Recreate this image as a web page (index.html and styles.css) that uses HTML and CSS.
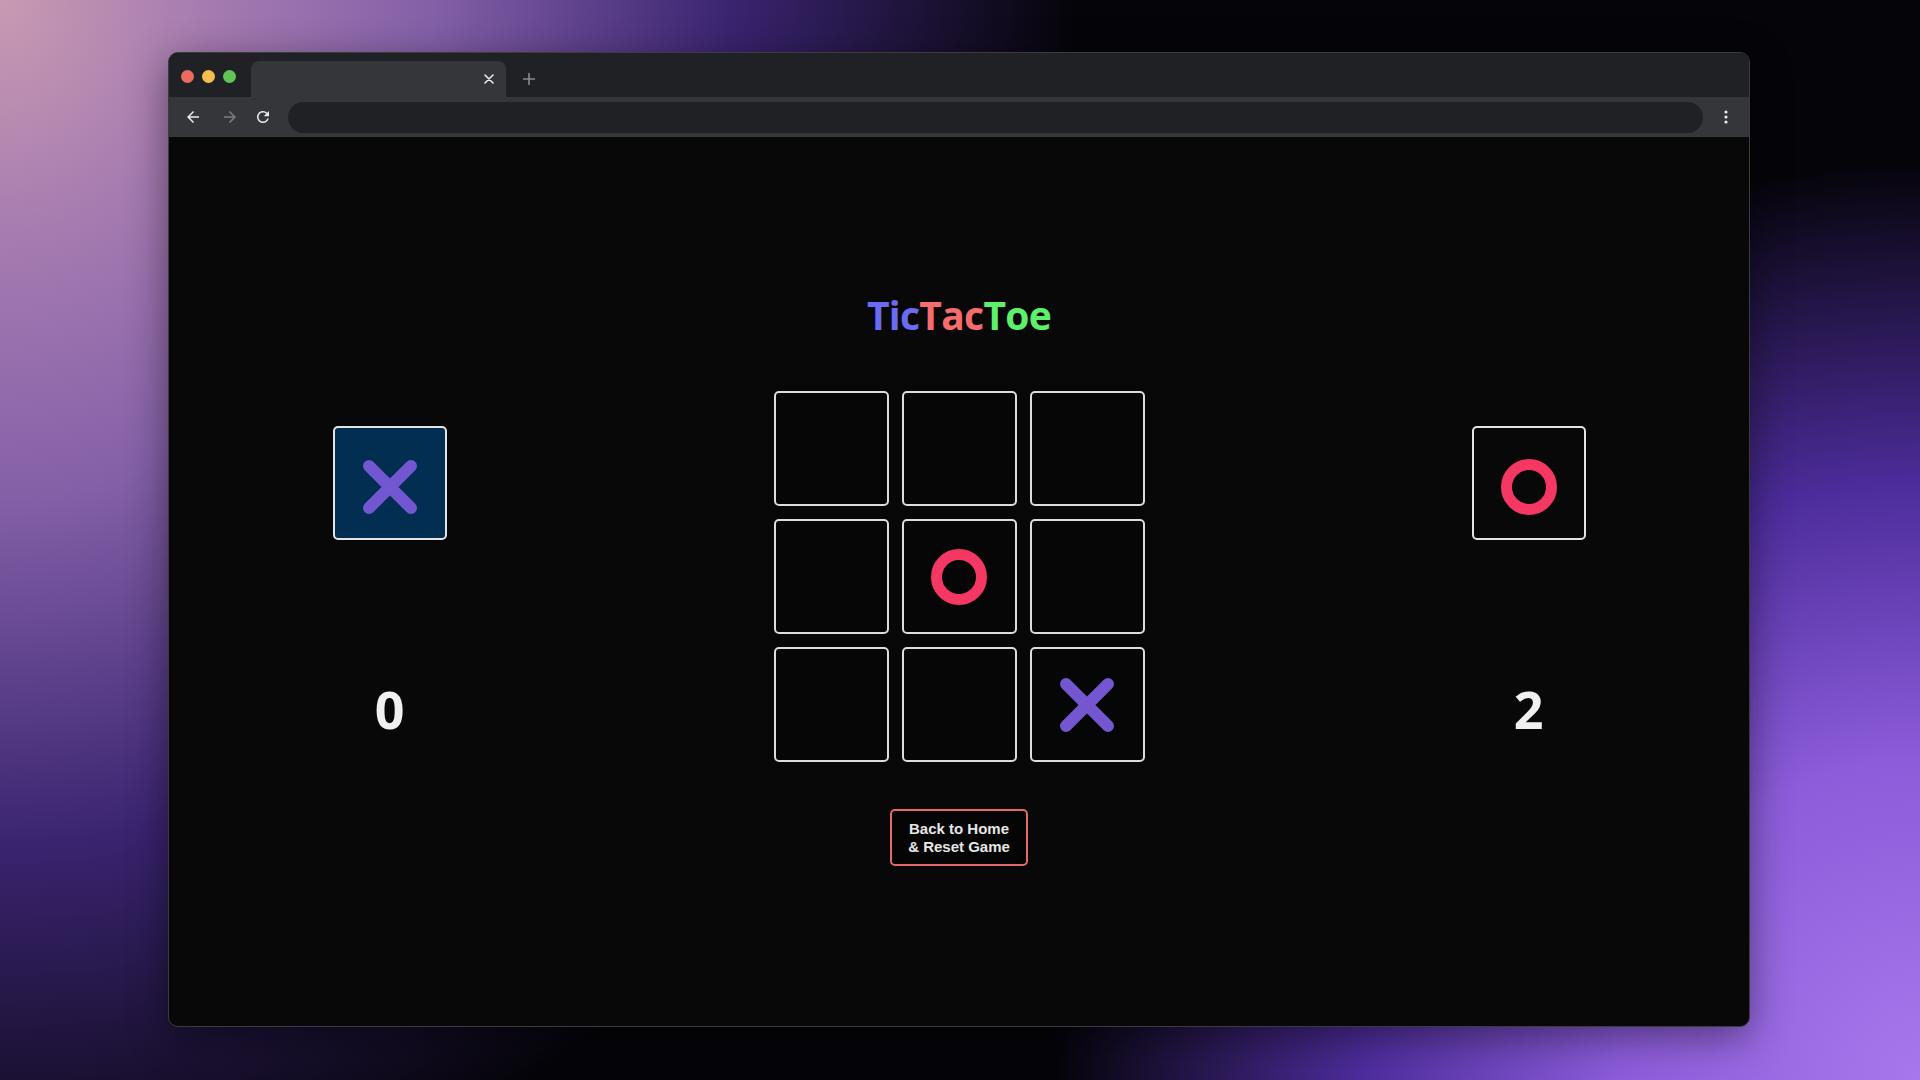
FILE: index.html
```html
<!DOCTYPE html>
<html lang="en">
<head>
<meta charset="utf-8">
<title>TicTacToe</title>
<link rel="stylesheet" href="styles.css">
</head>
<body>
<div class="window">
  <div class="tabstrip">
    <div class="lights">
      <span class="dot dot-red"></span>
      <span class="dot dot-yellow"></span>
      <span class="dot dot-green"></span>
    </div>
    <div class="tab">
      <svg class="tab-close" width="10" height="10" viewBox="0 0 10 10"><path d="M1 1L9 9M9 1L1 9" stroke="#e8eaed" stroke-width="1.6" stroke-linecap="round"/></svg>
    </div>
    <svg class="newtab" width="12" height="12" viewBox="0 0 12 12"><path d="M6 0V12M0 6H12" stroke="#8a8b8e" stroke-width="1.6"/></svg>
  </div>
  <div class="toolbar">
    <svg class="nav nav-back" width="18" height="18" viewBox="0 0 24 24"><path d="M20 11H7.83l5.59-5.59L12 4l-8 8 8 8 1.41-1.41L7.83 13H20v-2z" fill="#e8eaed"/></svg>
    <svg class="nav nav-fwd" width="18" height="18" viewBox="0 0 24 24"><path d="M12 4l-1.41 1.41L16.17 11H4v2h12.17l-5.58 5.59L12 20l8-8z" fill="#7d7e81"/></svg>
    <svg class="nav nav-reload" width="18" height="18" viewBox="0 0 24 24"><path d="M17.65 6.35A7.958 7.958 0 0 0 12 4c-4.42 0-7.99 3.58-7.99 8s3.57 8 7.99 8c3.73 0 6.84-2.55 7.73-6h-2.08A5.99 5.99 0 0 1 12 18c-3.31 0-6-2.69-6-6s2.69-6 6-6c1.66 0 3.14 0.69 4.22 1.78L13 11h7V4l-2.35 2.35z" fill="#e8eaed"/></svg>
    <div class="address"></div>
    <svg class="menu" width="4" height="14" viewBox="0 0 4 14"><circle cx="2" cy="2" r="1.6" fill="#e8eaed"/><circle cx="2" cy="7" r="1.6" fill="#e8eaed"/><circle cx="2" cy="12" r="1.6" fill="#e8eaed"/></svg>
  </div>
  <div class="content">
    <h1 class="title"><span class="t-tic">Tic</span><span class="t-tac">Tac</span><span class="t-toe">Toe</span></h1>
    <div class="game-row">
      <div class="side">
        <div class="mark-box mark-box-active">
          <svg width="54" height="54" viewBox="0 0 54 54"><path d="M6 6L48 48M48 6L6 48" stroke="#7257d0" stroke-width="12" stroke-linecap="round"/></svg>
        </div>
        <div class="score">0</div>
      </div>
      <div class="board">
        <div class="cell"></div>
        <div class="cell"></div>
        <div class="cell"></div>
        <div class="cell"></div>
        <div class="cell">
          <svg width="56" height="56" viewBox="0 0 56 56"><circle cx="28" cy="28" r="22.5" fill="none" stroke="#f43763" stroke-width="11"/></svg>
        </div>
        <div class="cell"></div>
        <div class="cell"></div>
        <div class="cell"></div>
        <div class="cell">
          <svg width="54" height="54" viewBox="0 0 54 54"><path d="M6 6L48 48M48 6L6 48" stroke="#7257d0" stroke-width="12" stroke-linecap="round"/></svg>
        </div>
      </div>
      <div class="side">
        <div class="mark-box">
          <svg width="56" height="56" viewBox="0 0 56 56"><circle cx="28" cy="28" r="22.5" fill="none" stroke="#f43763" stroke-width="11"/></svg>
        </div>
        <div class="score">2</div>
      </div>
    </div>
    <button class="reset">Back to Home<br>&amp; Reset Game</button>
  </div>
</div>
</body>
</html>
```

FILE: styles.css
```css
html, body {
  margin: 0;
  padding: 0;
}

body {
  width: 1920px;
  height: 1080px;
  overflow: hidden;
  box-sizing: border-box;
  padding: 52px 0 0 168px;
  background:
    radial-gradient(ellipse 56% 115% at 0% 0%, #c99ab2 0%, #a47ab0 20%, #8460a8 40%, #3a2470 68%, rgba(30, 18, 60, 0) 100%),
    radial-gradient(ellipse 45% 85% at 100% 100%, #a778ec 0%, #8c5cda 35%, #4c2c9a 65%, rgba(20, 10, 50, 0) 100%),
    #050409;
  font-family: "Open Sans", "Liberation Sans", sans-serif;
}

.window {
  width: 1582px;
  height: 975px;
  box-sizing: border-box;
  border: 1px solid #3c3c40;
  border-radius: 10px;
  overflow: hidden;
  display: flex;
  flex-direction: column;
  background: #080808;
  box-shadow: 0 10px 40px rgba(0, 0, 0, 0.45);
}

/* ---------- tab strip ---------- */
.tabstrip {
  height: 44px;
  flex: none;
  background: #202124;
  display: flex;
  align-items: flex-end;
}

.lights {
  display: flex;
  gap: 8px;
  align-self: flex-start;
  margin: 17px 0 0 12px;
}

.dot {
  width: 13px;
  height: 13px;
  border-radius: 50%;
}

.dot-red { background: #ed6a5e; }
.dot-yellow { background: #f5bf4f; }
.dot-green { background: #61c554; }

.tab {
  margin-left: 15px;
  width: 255px;
  height: 36px;
  background: #35363a;
  border-radius: 8px 8px 0 0;
  display: flex;
  align-items: center;
  justify-content: flex-end;
  box-sizing: border-box;
  padding: 0 12px 0 0;
}

.tab-close {
  display: block;
  margin-top: -1px;
}

.newtab {
  align-self: center;
  margin: 8px 0 0 17px;
}

/* ---------- toolbar ---------- */
.toolbar {
  height: 40px;
  flex: none;
  background: #35363a;
  display: flex;
  align-items: center;
}

.nav {
  display: block;
  flex: none;
}

.nav-back { margin-left: 15px; }
.nav-fwd { margin-left: 19px; }
.nav-reload { margin-left: 15px; }

.address {
  margin-left: 16px;
  flex: 1;
  height: 31px;
  border-radius: 16px;
  background: #202124;
}

.menu {
  display: block;
  margin: 0 21px 0 21px;
}

/* ---------- content ---------- */
.content {
  flex: 1;
  display: flex;
  flex-direction: column;
  align-items: center;
  padding-top: 151px;
}

.title {
  margin: 0;
  font-family: "Open Sans", sans-serif;
  font-weight: 700;
  font-size: 39px;
  line-height: 53px;
  letter-spacing: -0.7px;
}

.t-tic { color: #6a6af2; }
.t-tac { color: #f76c6c; }
.t-toe { color: #5eef6b; }

.game-row {
  margin-top: 50px;
  width: 100%;
  display: flex;
  justify-content: space-around;
  align-items: flex-start;
}

.side {
  display: flex;
  flex-direction: column;
  align-items: center;
  margin-top: 35px;
}

.mark-box {
  width: 114px;
  height: 114px;
  box-sizing: border-box;
  border: 2px solid #e4e4e4;
  border-radius: 5px;
  background: #080808;
  display: flex;
  align-items: center;
  justify-content: center;
}

.mark-box svg {
  display: block;
  margin-top: 8px;
}

.mark-box-active {
  background: #022f51;
}

.score {
  margin-top: 133px;
  font-family: "Open Sans", sans-serif;
  font-weight: 700;
  font-size: 52px;
  line-height: 71px;
  color: #f0f0f0;
}

.board {
  display: grid;
  grid-template-columns: repeat(3, 115px);
  grid-template-rows: repeat(3, 115px);
  gap: 13px;
}

.cell {
  box-sizing: border-box;
  border: 2px solid #dcdcdc;
  border-radius: 5px;
  background: #060606;
  display: flex;
  align-items: center;
  justify-content: center;
}

.cell svg {
  display: block;
}

.reset {
  margin-top: 47px;
  width: 138px;
  height: 57px;
  box-sizing: border-box;
  border: 2px solid #e26a6a;
  border-radius: 5px;
  background: #050505;
  color: #e6e6e6;
  font-family: "Liberation Sans", Arial, sans-serif;
  font-weight: 700;
  font-size: 15px;
  line-height: 18px;
  padding: 0;
  text-align: center;
}
```
